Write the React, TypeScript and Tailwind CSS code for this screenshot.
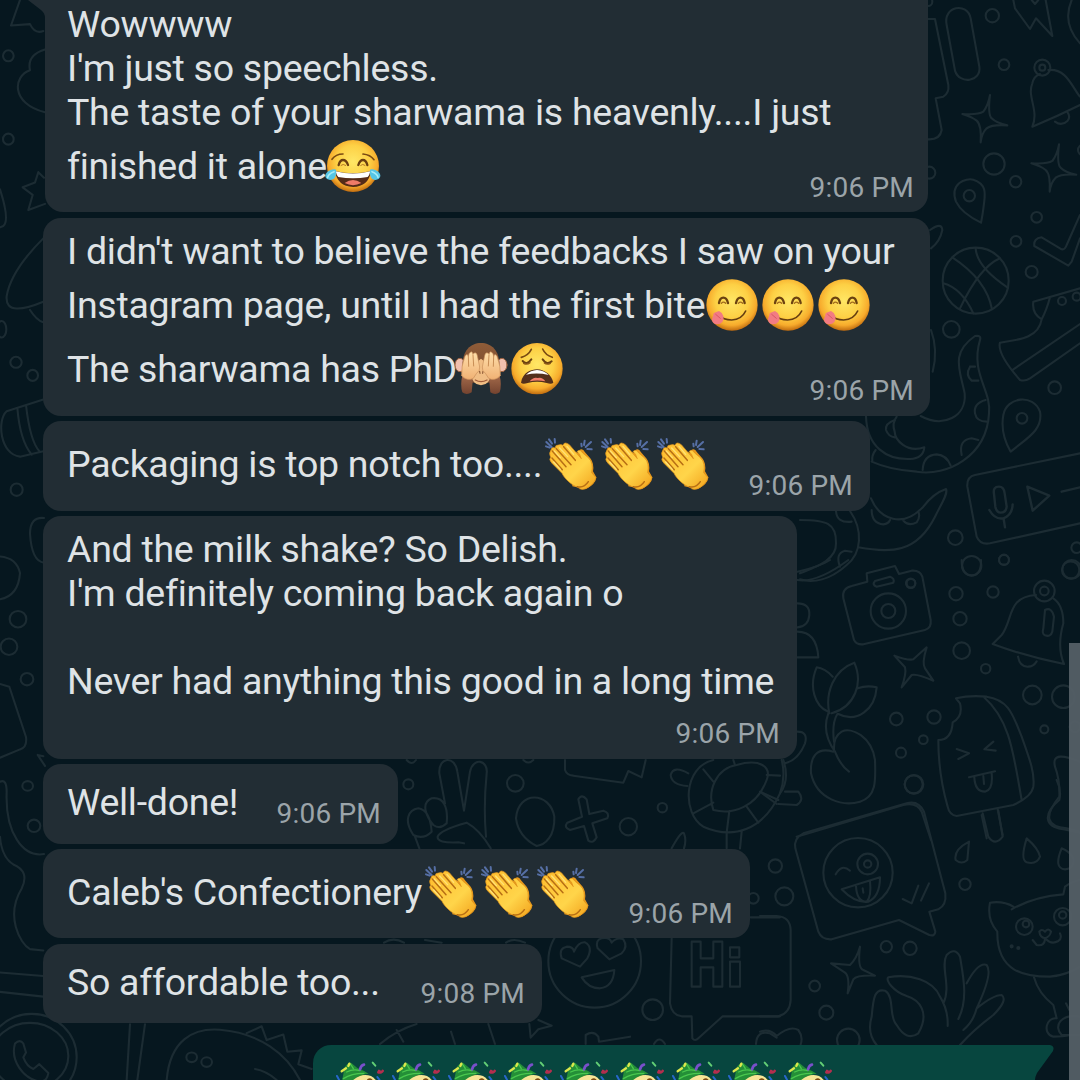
import type { ReactNode } from "react";

/* ---------- Wallpaper ---------- */

const STAR =
  "M570 285 Q563 345 575 355 Q590 370 622 376 Q575 373 560 385 Q545 400 542 427 Q545 375 530 362 Q515 350 487 342 Q535 345 550 335 Q565 315 570 285Z";

function Dots({ items }: { items: number[][] }) {
  return (
    <>
      {items.map(([x, y, r]) => (
        <circle key={`${x}-${y}-${r}`} cx={x} cy={y} r={r} />
      ))}
    </>
  );
}

function Wallpaper() {
  return (
    <svg
      className="absolute inset-0 h-full w-full fill-none stroke-[#1c2c33] [&_*]:[vector-effect:non-scaling-stroke]"
      viewBox="0 0 1080 1080"
      strokeWidth="2.1"
      strokeLinecap="round"
      strokeLinejoin="round"
    >
      {/* top right: bell, capsule, sparkles, pin, ball */}
      <g transform="translate(800 0) scale(.33333)">
        <Dots items={[[577, 47, 20], [612, 194, 16], [727, 203, 24], [727, 203, 9], [582, 492, 32], [647, 545, 17], [710, 652, 16], [648, 724, 16], [695, 816, 18], [508, 587, 17], [527, 842, 99], [388, 518, 18], [384, 5, 13], [850, 450, 16]]} />
        <path d="M697 380 C718 330 680 290 697 250 Q702 228 720 222 M745 210 C800 205 815 260 840 290 M697 380 Q770 350 840 315 M765 365 Q785 380 803 362 Q812 350 803 338" />
        <path d="M440 75 C428 18 502 5 512 55 L538 200 C545 245 478 255 465 212Z" />
        <path d="M384 57 H405 L445 255 Q448 280 430 290 L407 295 L425 390 Q420 420 384 418" />
        <path d={STAR} />
        <path d={STAR} transform="translate(207 148)" />
        <path d="M543 668 Q485 640 468 605 C448 550 498 533 520 539 C562 552 555 585 552 610 Q548 645 543 668Z" />
        <path d="M640 0 L645 25 L690 87 L708 55 L757 108 L737 0 M695 0 L705 12 L715 0 M815 0 Q785 70 840 130" />
        <path d="M840 645 L800 735 Q795 750 785 748 L725 712 Q700 715 703 738 L805 797 L815 785 L840 715" />
        <path d="M457 772 Q560 840 576 928 M527 745 Q530 800 622 862 M600 775 Q540 800 480 925 M430 850 Q485 865 520 940" />
        <path d="M390 690 Q425 665 427 690 Q420 725 393 745" />
      </g>

      {/* right: shoe, tentacles, voice message */}
      <g transform="translate(800 290) scale(.33333)">
        <Dots items={[[454, 118, 25], [786, 33, 12], [830, 20, 12], [764, 293, 19], [666, 385, 16], [466, 743, 22], [515, 827, 29], [612, 809, 15], [830, 773, 16], [815, 838, 28], [333, 880, 13]]} />
        <path d="M840 -5 L700 35 Q695 70 725 88 Q740 60 750 22 M725 88 C715 150 640 150 600 158 Q590 190 660 270 Q675 275 690 265 L840 160 M640 238 L840 102" />
        <path d="M393 120 Q415 180 398 245" />
        <path d="M362 378 C430 415 500 380 494 310 C480 240 450 190 525 138 Q545 135 540 150 C510 250 575 300 567 370 C560 500 440 560 350 545 Q270 540 215 515" />
        <path d="M198 378 C200 470 260 510 330 507 Q370 505 373 472 C320 490 285 450 284 425 Q275 400 290 380 M227 480 Q215 495 217 512" />
        <path d="M510 230 Q495 255 515 272 L535 272 M525 230 L510 230 M557 330 Q520 340 525 370 Q530 395 560 395 M485 495 Q475 450 515 445 L535 450 M368 540 Q370 495 410 493 Q440 495 452 527 M285 390 Q255 400 258 420 Q265 440 285 442" />
        <path d="M213 625 C240 690 310 715 370 650 Q400 610 438 597 C445 610 425 640 405 680 C350 790 270 790 175 772 M215 660 Q215 700 250 703 Q265 702 270 690 M310 692 Q325 710 350 697 Q362 680 355 665" />
        <path d="M0 690 C80 690 110 700 108 760 C110 810 50 830 0 850 M150 663 C190 720 185 790 140 825 C90 870 40 880 0 868 M108 663 Q110 700 155 695 M120 830 Q105 790 135 782 L155 785" />
        <path d="M632 485 Q600 430 610 375 C620 320 700 310 720 365 C730 420 680 445 632 485Z" />
        <path d="M840 490 L525 555 Q500 560 502 590 L530 740 Q540 765 570 760 L840 700" />
        <path d="M582 612 Q578 590 597 590 Q612 590 614 610 L620 650 Q618 668 602 668 Q590 668 586 650Z M568 660 Q585 690 610 685 Q637 675 638 643 M611 687 L615 712 M682 590 L748 617 L698 662Z M785 605 L840 592" strokeWidth="2.4" />
      </g>

      {/* camera, sprout, bell, ice cream */}
      <g transform="translate(780 560) scale(.33333)">
        <Dots items={[[325, 153, 53], [325, 153, 21], [392, 70, 14], [528, 101, 20], [639, 96, 17], [540, 176, 20], [545, 272, 25], [617, 326, 14], [872, 30, 26], [793, 93, 31], [793, 93, 13], [757, 405, 28], [850, 410, 34], [793, 508, 12], [349, 477, 19], [462, 471, 20], [430, 539, 13], [363, 578, 15], [402, 673, 28], [885, 500, 16], [672, 0, 15]]} />
        <path d="M190 115 Q185 85 215 78 L262 65 L260 40 L345 18 L357 42 L395 32 Q420 30 427 50 L452 180 Q455 205 435 210 L250 253 Q230 255 222 240Z M285 63 L330 50 Q345 55 340 68 L290 80 Q275 75 285 63Z" />
        <path d="M440 262 Q425 310 435 325 L460 362 Q410 340 395 345 L365 382 Q380 340 375 322 L343 287 Q385 302 400 298Z" />
        <path d="M545 0 Q545 45 575 47 Q605 45 603 0 M52 60 Q110 70 205 0 M52 35 Q120 20 150 0 M52 130 Q90 130 88 165 Q85 200 52 202 M52 215 Q110 215 115 292 H52" />
        <path d="M768 105 C680 110 700 180 665 225 L638 252 Q740 290 852 312 Q830 260 850 190 Q850 135 820 115 M714 290 Q720 322 745 320 Q760 320 770 304" />
        <path d="M795 150 Q815 140 822 170 L817 215 Q812 232 795 226 Q785 222 790 205Z" />
        <path d="M148 460 C135 400 160 330 223 308 C250 370 225 440 155 460 M145 455 C105 440 85 380 110 322 Q135 325 158 350 M233 385 Q260 375 290 382 C285 450 230 490 175 462 M145 460 C130 500 140 540 165 575 Q180 615 207 635 M172 462 Q155 490 162 545" />
        <path d="M160 575 C110 560 90 590 93 640 C110 720 190 740 240 725 C290 710 287 660 285 600 C275 530 215 500 185 515 Q160 530 162 570" />
        <path d="M528 415 Q570 405 620 410 C690 420 700 470 725 530 C750 600 765 640 760 680 Q755 710 700 735 L530 768 Q508 765 503 740 C480 660 475 600 475 540 Q515 540 518 487 Q550 470 540 430Z M612 412 C690 480 700 580 725 720" />
        <path d="M530 567 L567 580 L535 597 M640 545 L613 568 L647 572 M567 652 L645 634 M583 652 Q585 695 615 695 Q640 690 635 640 M610 648 L612 672 M605 765 L620 835 M653 748 L668 825" />
        <path d="M50 830 L370 735 Q410 725 425 755 L453 840 M900 605 C850 585 815 580 825 620 Q840 660 838 710 C790 770 800 800 860 805 L900 815" />
        <path d="M52 515 Q85 515 75 550 Q55 600 15 610 M10 600 Q30 660 0 700" />
      </g>

      {/* photo sticker, cat, hand */}
      <g transform="translate(760 780) scale(.33333)">
        <Dots items={[[294, 278, 104], [323, 252, 31], [323, 252, 11], [46, 258, 20], [73, 349, 27], [615, 313, 17], [379, 500, 17], [450, 505, 20], [164, 618, 16], [199, 698, 21], [265, 780, 34], [461, 13, 27], [793, 440, 25], [798, 432, 10], [908, 410, 26], [908, 405, 11], [755, 499, 3], [775, 504, 3]]} />
        <path d="M106 205 Q100 175 130 160 L440 70 Q475 60 492 95 L556 340 Q560 375 535 388 L508 395 L526 455 Q525 470 508 465 L417 420 L215 478 Q185 480 175 455Z" />
        <path d="M227 283 Q245 250 270 272 M245 328 L360 292 Q360 350 325 365 Q285 370 245 328Z M288 318 Q290 365 320 365 Q335 350 330 303 M308 325 L310 338 M428 357 L455 370 L475 317 M483 362 L507 310" />
        <path d="M668 100 L685 170 Q705 200 728 170 L715 92 M0 408 H50 Q90 410 92 450 V660 Q90 700 55 709 H0" />
        <path d="M627 185 Q580 210 587 240 Q605 255 622 240Z M800 175 Q780 240 800 247 Q830 255 840 230 Q835 205 800 175Z M905 205 Q880 265 915 268 Q945 265 940 235 Q930 215 905 205Z" />
        <path d="M213 550 L270 555 Q290 535 300 500 Q292 565 310 570 L345 587 Q290 585 280 598 L263 640 Q270 590 255 578Z" />
        <path d="M350 795 Q320 760 335 710 C340 650 345 625 375 632 C405 650 385 710 410 735 Q440 785 475 760 C510 700 480 660 440 648 C400 635 375 600 385 592 C450 580 520 600 540 650 Q565 690 563 738 M550 670 C575 620 540 560 560 525 Q585 500 600 530 C610 590 625 660 595 717 M620 610 Q655 545 680 555 Q700 580 650 685 M650 685 Q700 645 725 645 Q745 660 700 705 Q640 750 600 795 M650 685 Q640 725 610 750" />
        <path d="M755 388 Q820 350 910 343 L915 320 Q935 305 960 300 M760 380 Q730 362 690 368 Q680 420 712 455 C710 580 800 590 870 590 Q920 585 960 560 M838 455 Q845 445 855 455 Q865 442 873 455 Q870 470 855 475 Q840 472 838 455 M855 475 Q855 500 830 495 L818 480 M858 478 Q875 495 895 483 Q907 475 900 460" />
        <path d="M822 592 Q835 640 880 675 L890 715 C860 710 845 760 880 770 Q910 770 930 765 M960 710 C900 700 880 740 905 765 H960 M918 670 L928 690" />
        <path d="M0 755 Q30 745 50 768 Q90 735 115 750 Q130 770 122 793 M890 0 Q905 30 898 60 C850 100 850 140 910 148 L960 158 M0 35 L50 72 M75 35 L115 35 Q135 60 110 75 L55 72" />
      </g>

      {/* bottom centre: peace sign, plus, turtle, heart eyes, greeting */}
      <g transform="translate(380 740) scale(.33333)">
        <Dots items={[[85, 133, 15], [406, 130, 25], [847, 203, 14], [745, 260, 26], [818, 809, 31], [644, 664, 139]]} />
        <path d="M195 190 L178 100 C175 50 225 45 232 95 L252 212 L270 95 C280 50 325 60 320 100 Q310 200 318 290 M200 250 C205 200 190 170 155 175 C120 190 140 230 160 255 Q180 270 200 250 M155 275 Q130 300 100 285 C70 240 85 210 115 205 Q150 210 155 275 M118 325 L105 290 M252 310 L235 307 Q170 310 173 290 Q180 270 260 248 Q300 270 332 325" />
        <path d="M408 235 C415 150 510 155 523 230 C525 290 495 315 470 318 Q415 290 408 235Z" />
        <path d="M595 178 Q605 160 620 178 L628 222 L670 212 Q690 218 682 235 L637 250 L650 292 Q640 312 625 302 L612 258 L570 270 Q550 262 562 248 L606 230Z" />
        <path d="M555 60 V90 Q560 105 580 107 L730 128 L745 93 L785 112 L797 60" />
        <path d="M1000 60 C910 80 905 220 970 260 C1060 300 1150 270 1200 160 Q1218 110 1205 60 M925 100 Q880 75 872 105 Q875 135 922 138 M1000 210 C980 150 1010 85 1070 75 C1140 55 1175 80 1160 120 C1130 200 1060 225 1000 210Z M970 88 L1000 125 M1060 60 L1065 75 M940 220 L1000 188 M1048 213 L1040 278 M1100 200 L1135 248 M1145 157 L1195 180 M1160 105 L1200 107 M1040 278 V325 M1085 275 L1080 325 M875 325 Q905 270 912 280 Q920 300 912 325" />
        <path d="M600 680 L545 655 Q535 625 560 620 Q580 620 582 635 Q595 605 615 607 Q640 620 622 655Z M688 658 L653 625 Q645 600 665 595 Q690 590 695 608 Q710 590 730 598 Q745 620 725 640Z M605 712 L703 690 Q700 740 660 745 Q625 745 605 712Z" />
        <path d="M875 595 L870 790 Q875 825 905 829 H935 L937 895 Q945 905 955 895 L1028 829 H1200 M1112 532 H1200" />
        <path d="M935 605 H962 V655 H1000 V605 H1027 V740 H1000 V682 H962 V740 H935Z M1050 622 H1078 V652 H1050Z M1050 665 H1080 V740 H1050Z" />
        <path d="M1128 912 Q1130 870 1170 880 L1190 893 M617 912 V885 Q640 870 655 890 L657 905 L750 890 M822 912 Q838 885 855 912 M0 912 Q50 870 110 852 M50 870 L70 905 M213 875 L225 912 M325 852 L345 912 M475 840 L515 857 L475 868 L452 893 L448 852" />
        <path d="M80 60 Q95 78 108 60 M430 60 Q445 75 460 60 M12 608 Q40 590 72 608 M135 600 L185 608 M378 608 Q400 592 435 608" />
        <circle cx="1120" cy="475" r="16" />
      </g>

      {/* left edge */}
      <g transform="scale(.33333 .68878)">
        <path d="M60 0 L33 37 L90 35 Q105 50 130 45 M135 72 Q80 80 90 102 C40 110 30 150 135 163 M115 250 L105 265 L68 272 L98 283 L85 305 L135 296 M115 250 L132 258 M0 275 Q30 320 10 328 L0 330 M132 345 C80 370 30 400 20 430 C15 455 70 450 130 438 M90 450 Q110 465 130 468" />
        <path d="M130 580 L20 597 C-10 610 0 660 60 663 L130 655 M52 592 Q60 640 95 660 M78 588 Q90 640 118 655 M132 752 Q90 750 90 775 Q95 815 132 817 M0 808 Q50 810 60 832 Q55 865 0 870 M0 993 L28 997 L78 1070 Q82 1085 60 1088 L0 1100 M130 1098 L113 1096 L135 1112" />
        <path d="M0 1135 Q20 1130 20 1150 C15 1210 70 1245 132 1240 M0 1215 Q5 1245 40 1255 Q90 1265 65 1290 C15 1330 60 1370 90 1378 L130 1380 M0 1412 L130 1417 M0 1440 L130 1447" />
        <ellipse cx="95" cy="1535" rx="135" ry="63" />
        <ellipse cx="90" cy="1533" rx="115" ry="48" />
        <path d="M45 1515 Q60 1508 70 1515 L78 1528 L70 1535 Q80 1548 100 1552 L118 1545 L145 1558 Q140 1572 115 1570 C70 1565 30 1540 45 1515Z M390 1487 L380 1568 M435 1487 L412 1568 M500 1568 C510 1510 580 1492 660 1495 C780 1500 860 1530 900 1568 M740 1500 L785 1490 L800 1510 L850 1502 L862 1527 L905 1525 L895 1545 L935 1552 M765 1552 Q800 1555 830 1568" />
        {[[25, 81, 16, 8], [25, 202, 16, 8], [5, 478, 14, 12], [48, 526, 17, 8], [98, 545, 16, 8], [50, 711, 18, 9], [54, 899, 25, 12], [27, 939, 25, 12], [81, 986, 19, 9], [83, 1141, 16, 7], [102, 1199, 19, 9], [575, 1535, 16, 7], [620, 1542, 16, 7]].map(([x, y, rx, ry]) => (
          <ellipse key={`${x}-${y}`} cx={x} cy={y} rx={rx} ry={ry} />
        ))}
      </g>
    </svg>
  );
}

/* ---------- Emoji ---------- */

function Gradients() {
  return (
    <svg className="absolute h-0 w-0">
      <defs>
        <radialGradient id="face" cx=".5" cy=".42" r=".58">
          <stop offset="0" stopColor="#ffe766" />
          <stop offset=".55" stopColor="#fdd045" />
          <stop offset=".82" stopColor="#f7ab2c" />
          <stop offset="1" stopColor="#c06c10" />
        </radialGradient>
        <linearGradient id="hand" x1="0" y1="0" x2="1" y2="1">
          <stop offset="0" stopColor="#ffbb2c" />
          <stop offset=".6" stopColor="#ffd54a" />
          <stop offset="1" stopColor="#f2a01a" />
        </linearGradient>
        <linearGradient id="fur" x1="0" y1="0" x2="0" y2="1">
          <stop offset="0" stopColor="#8f5c38" />
          <stop offset="1" stopColor="#75452c" />
        </linearGradient>
        <linearGradient id="paw" x1="0" y1="0" x2="0" y2="1">
          <stop offset="0" stopColor="#ffe0ac" />
          <stop offset="1" stopColor="#f0b174" />
        </linearGradient>
        <linearGradient id="arm" x1="0" y1="0" x2="0" y2="1">
          <stop offset="0" stopColor="#a2694a" />
          <stop offset="1" stopColor="#74432f" />
        </linearGradient>
      </defs>
    </svg>
  );
}

function Emoji({ viewBox, children }: { viewBox: string; children: ReactNode }) {
  return (
    <svg className="h-14 w-14 shrink-0 fill-none" viewBox={viewBox} strokeLinecap="round" strokeLinejoin="round">
      {children}
    </svg>
  );
}

function Joy() {
  return (
    <Emoji viewBox="76 53 168 168">
      <circle cx="160" cy="137" r="78" fill="url(#face)" />
      <path d="M97 117 Q108 101 130 101 M190 101 Q212 103 223 118" stroke="#7a4a12" strokeWidth="5" />
      <path d="M117 134 Q121 119 130 119 Q140 119 145 134 M176 134 Q181 119 190 119 Q199 119 203 134" stroke="#6b3f10" strokeWidth="7" />
      <path d="M124 135 Q130 129 138 135 M183 135 Q189 129 196 135" stroke="#b67a23" strokeWidth="3" />
      <path d="M106 152 Q160 166 214 152 Q207 199 160 200 Q113 198 106 152Z" fill="#542b18" />
      <path d="M108 153 Q160 166 212 153 Q210 164 204 170 Q160 178 116 170 Q110 164 108 153Z" fill="#fff" />
      <path d="M135 188 Q160 170 185 188 Q160 201 135 188Z" fill="#ef7b68" />
      <path d="M109 148 C94 143 76 157 77 168 C79 181 97 181 104 174 Q111 164 109 148Z M211 148 C226 143 244 157 242 168 C239 181 222 181 216 174 Q209 164 211 148Z" fill="#55c5e5" />
      <path d="M103 154 Q86 160 84 171 M217 154 Q233 160 235 171" stroke="#a6ecf7" strokeWidth="5" />
    </Emoji>
  );
}

function Yum() {
  return (
    <Emoji viewBox="12 22 168 168">
      <circle cx="96" cy="106" r="77" fill="url(#face)" />
      <path d="M57 100 Q60 84 70 84 Q80 84 84 100 M108 100 Q112 84 121 84 Q131 84 134 100" stroke="#6b4210" strokeWidth="7" />
      <path d="M64 101 Q70 94 77 101 M115 101 Q121 94 128 101" stroke="#a26b1c" strokeWidth="4" />
      <path d="M57 137 Q70 150 95 151 Q125 150 137 124" stroke="#653d10" strokeWidth="5" />
      <path d="M40 137 Q39 130 47 128 L57 124 Q67 128 70 139 Q73 148 67 157 Q59 166 46 163 Q36 160 36 149Z" fill="#f27b83" />
      <path d="M47 134 L61 146" stroke="#d95765" strokeWidth="3" />
    </Emoji>
  );
}

function Weary() {
  return (
    <Emoji viewBox="207 20 168 168">
      <circle cx="291" cy="103" r="77" fill="url(#face)" />
      <path d="M244 69 Q265 63 274 45 M308 44 Q316 62 337 69" stroke="#7a4a12" strokeWidth="5" />
      <path d="M248 80 Q260 94 274 75 M308 75 Q321 94 335 81" stroke="#6b4210" strokeWidth="6" />
      <path d="M251 87 Q261 93 270 85 M313 86 Q321 92 331 87" stroke="#8b5819" strokeWidth="4" />
      <path d="M243 145 C248 114 274 105 291 105 C315 106 336 123 340 145 Q335 151 320 146 Q291 138 263 146 Q248 151 243 145Z" fill="#53301c" />
      <path d="M258 121 Q272 108 291 107 Q313 108 326 122 Q291 114 258 121Z" fill="#fff" />
      <path d="M269 141 Q280 127 293 131 Q307 127 316 141 Q291 136 269 141Z" fill="#f07d6c" />
    </Emoji>
  );
}

function Monkey() {
  return (
    <Emoji viewBox="39 20 168 168">
      <ellipse cx="60" cy="92" rx="15" ry="20" fill="#f0bfae" stroke="#9c6240" strokeWidth="3" />
      <ellipse cx="186" cy="92" rx="15" ry="20" fill="#f0bfae" stroke="#9c6240" strokeWidth="3" />
      <path d="M67 96 C67 48 92 26 123 26 C154 26 179 48 179 96 Q174 130 152 145 H94 Q72 130 67 96Z" fill="url(#fur)" />
      <path d="M67 124 Q60 151 67 174 Q80 184 95 174 L99 130Z M179 124 Q186 151 179 174 Q166 184 151 174 L147 130Z" fill="url(#arm)" />
      <path d="M123 73 Q148 88 150 120 Q152 151 123 153 Q94 151 96 120 Q98 88 123 73Z" fill="#f1be85" />
      <path d="M106 137 Q123 147 141 137" stroke="#a05c3b" strokeWidth="4" />
      <path d="M119 111 L120 117 M129 111 L128 117" stroke="#7c4726" strokeWidth="3" />
      <path id="paw-shape" d="M65 124 Q63 95 75 66 Q82 54 85 67 L87 58 Q96 46 99 60 L101 57 Q110 52 112 64 L119 98 Q121 109 109 118 L100 132 Q82 142 65 124Z" fill="url(#paw)" stroke="#c78d58" strokeWidth="2" />
      <use href="#paw-shape" transform="matrix(-1 0 0 1 246 0)" />
      <path d="M85 67 L86 96 M99 62 L101 95 M161 67 L160 96 M147 62 L145 95" stroke="#c88d55" strokeWidth="3" />
    </Emoji>
  );
}

function Clap() {
  return (
    <Emoji viewBox="22 33 168 168">
      <path d="M32 51 L48 66 M40 43 L49 56 M57 42 L58 53 M31 64 L42 68 M166 51 L150 66 M147 47 L145 60 M137 56 L138 64 M168 73 L155 72" stroke="#566fa5" strokeWidth="6" />
      <path d="M112 85 Q118 77 127 84 L130 77 Q140 67 148 82 L165 101 Q176 116 172 139 L182 157 Q180 178 151 192 L110 184Z" fill="#e8991c" />
      <path
        d="M46 75 Q47 65 59 69 Q58 60 68 60 Q76 57 82 61 Q86 48 101 59 L137 101 Q132 84 124 80 Q133 70 141 84 L159 99 Q174 114 168 143 L181 158 Q174 181 148 192 Q134 196 127 187 C105 180 85 158 79 145 L49 115 Q38 103 45 97 Q38 84 46 75Z"
        fill="url(#hand)"
        stroke="#dc8f1a"
        strokeWidth="2"
      />
      <path d="M49 99 L80 134 M50 78 L91 125 M62 71 L106 119 M84 65 L119 106 M125 185 Q145 190 158 170" stroke="#b86f14" strokeWidth="4.5" />
      <path d="M56 78 L74 98 M72 69 L96 95 M94 64 L114 88 M54 111 L74 133" stroke="#ffe277" strokeWidth="4" />
    </Emoji>
  );
}

function Party() {
  return (
    <Emoji viewBox="96 90 168 168">
      <circle cx="184" cy="212" r="76" fill="url(#face)" />
      <path d="M150 156 Q180 128 213 138 Q226 144 228 156Z" fill="#f6e596" />
      <path d="M125 158 L134 112 Q145 94 154 99 L172 114 Q192 122 206 131 Q175 134 150 158Z" fill="#248f37" />
      <path d="M148 101 Q154 104 160 116 M140 126 Q160 116 180 122 M130 146 Q154 130 192 130" stroke="#49c74e" strokeWidth="4" />
      <path d="M125 124 L138 115 M148 101 L145 108" stroke="#dce64c" strokeWidth="7" />
      <path d="M180 118 Q184 105 192 104" stroke="#7950cb" strokeWidth="8" />
      <path d="M218 98 L226 107" stroke="#62ce75" strokeWidth="6" />
      <path d="M237 123 Q245 129 248 123 M235 127 L243 127" stroke="#b32e4e" strokeWidth="8" />
      <path d="M111 138 L117 149 M232 141 L238 149" stroke="#2867cb" strokeWidth="6" />
      <path d="M204 149 Q210 145 215 150" stroke="#7a4a12" strokeWidth="5" />
    </Emoji>
  );
}

/* ---------- Messages ---------- */

function Time({ children, className = "-mb-[6px]" }: { children: ReactNode; className?: string }) {
  return (
    <time className={`-mr-px ml-auto self-end text-[28px] leading-[32px] tracking-[0.2px] text-[#9ba4a9] ${className}`}>{children}</time>
  );
}

function Bubble({ className, children }: { className: string; children: ReactNode }) {
  return <article className={`shrink-0 rounded-[18px] bg-[#222d34] pr-[18px] pl-[24px] ${className}`}>{children}</article>;
}

function Line({ children }: { children?: ReactNode }) {
  return <p className="flex h-11 items-center">{children}</p>;
}

function TallLine({ children }: { children: ReactNode }) {
  return <p className="flex h-16 items-center">{children}</p>;
}

export default function App() {
  return (
    <main className="relative h-[1080px] w-[1080px] overflow-hidden bg-[#06171f] font-['Roboto',sans-serif] text-[37.5px] leading-[44px] tracking-[-0.28px] whitespace-pre text-[#dfe3e6]">
      <Wallpaper />
      <Gradients />
      <svg className="absolute top-0 left-[28px] h-[18px] w-[20px] fill-[#222d34]" viewBox="0 0 20 18">
        <path d="M0 0H20V18H17Q17 13 13 10Z" />
      </svg>

      <section className="relative flex h-full flex-col items-start pl-[43px]">
        <Bubble className="ml-[2px] h-[212px] w-[883px] rounded-t-none pt-[2px] !pr-[15px] !pl-[22px]">
          <Line>Wowwww</Line>
          <Line>I'm just so speechless.</Line>
          <Line>The taste of your sharwama is heavenly....I just</Line>
          <TallLine>
            <span className="w-[258px]">finished it alone</span>
            <Joy />
            <Time>9:06 PM</Time>
          </TallLine>
        </Bubble>

        <Bubble className="mt-[6px] h-[198px] w-[887px] pt-[11px] !pr-[17px]">
          <Line>I didn't want to believe the feedbacks I saw on your</Line>
          <TallLine>
            <span className="w-[637px]">Instagram page, until I had the first bite</span>
            <Yum />
            <Yum />
            <Yum />
          </TallLine>
          <TallLine>
            <span className="w-[386px]">The sharwama has PhD</span>
            <Monkey />
            <Weary />
            <Time>9:06 PM</Time>
          </TallLine>
        </Bubble>

        <Bubble className="mt-[5px] h-[90px] w-[827px] pt-[11px]">
          <TallLine>
            <span className="w-[476px]">Packaging is top notch too....</span>
            <Clap />
            <Clap />
            <Clap />
            <Time>9:06 PM</Time>
          </TallLine>
        </Bubble>

        <Bubble className="mt-[5px] h-[243px] w-[754px] pt-[11px]">
          <Line>And the milk shake? So Delish.</Line>
          <Line>I'm definitely coming back again o</Line>
          <Line />
          <Line>Never had anything this good in a long time</Line>
          <div className="flex h-[47px]">
            <Time className="mb-0">9:06 PM</Time>
          </div>
        </Bubble>

        <Bubble className="mt-[5px] h-[80px] w-[355px] pt-4">
          <Line>
            <span>Well-done!</span>
            <Time>9:06 PM</Time>
          </Line>
        </Bubble>

        <Bubble className="mt-[5px] h-[89px] w-[707px] pt-[11px]">
          <TallLine>
            <span className="w-[356px]">Caleb's Confectionery</span>
            <Clap />
            <Clap />
            <Clap />
            <Time>9:06 PM</Time>
          </TallLine>
        </Bubble>

        <Bubble className="mt-[6px] h-[79px] w-[499px] pt-4">
          <Line>
            <span>So affordable too...</span>
            <Time>9:08 PM</Time>
          </Line>
        </Bubble>

        <article className="mt-[22px] ml-[270px] flex h-[35px] w-[722px] shrink-0 overflow-hidden rounded-tl-[18px] bg-[#07463f] pt-[15px] pl-[19px]">
          <Party />
          <Party />
          <Party />
          <Party />
          <Party />
          <Party />
          <Party />
          <Party />
          <Party />
        </article>
      </section>

      <svg className="absolute top-[1045px] left-[1034px] h-[35px] w-[21px] fill-[#07463f]" viewBox="0 0 21 35">
        <path d="M0 0H16Q21 1 19 6L3 28Q1 32 1 35H0Z" />
      </svg>
      <div className="absolute top-[643px] right-0 h-[437px] w-[11px] bg-[#545f66]/95" />
    </main>
  );
}
